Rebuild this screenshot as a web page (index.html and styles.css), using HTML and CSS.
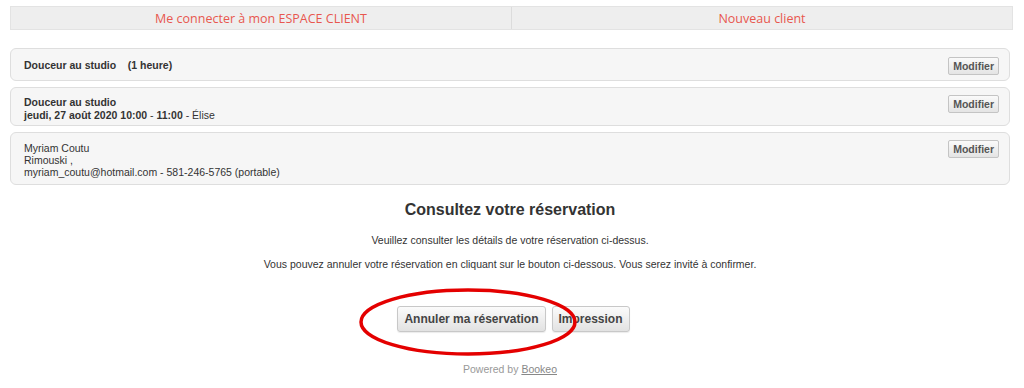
FILE: index.html
```html
<!DOCTYPE html>
<html lang="fr">
<head>
<meta charset="utf-8">
<link rel="stylesheet" href="styles.css">
</head>
<body>
<div class="page">
  <div class="topbar">
    <a class="tab">Me connecter à mon ESPACE CLIENT</a>
    <a class="tab">Nouveau client</a>
  </div>

  <div class="cards">
    <div class="card c1">
      <div class="info"><b>Douceur au studio &nbsp;&nbsp; (1 heure)</b></div>
      <button class="mod">Modifier</button>
    </div>
    <div class="card c2">
      <div class="info"><b>Douceur au studio</b><br><b>jeudi, 27 août 2020 10:00</b> - <b>11:00</b> - Élise</div>
      <button class="mod">Modifier</button>
    </div>
    <div class="card c3">
      <div class="info">Myriam Coutu<br>Rimouski ,<br>myriam_coutu@hotmail.com - 581-246-5765 (portable)</div>
      <button class="mod">Modifier</button>
    </div>
  </div>

  <h2 class="title">Consultez votre réservation</h2>
  <p class="txt t1">Veuillez consulter les détails de votre réservation ci-dessus.</p>
  <p class="txt t2">Vous pouvez annuler votre réservation en cliquant sur le bouton ci-dessous. Vous serez invité à confirmer.</p>

  <div class="actions">
    <button class="btn">Annuler ma réservation</button>
    <button class="btn">Impression</button>
  </div>

  <div class="powered">Powered by <a>Bookeo</a></div>

  <svg class="ring" width="230" height="72" viewBox="0 0 230 72">
    <ellipse cx="115" cy="36" rx="107" ry="32" fill="none" stroke="#e40000" stroke-width="3.5"/>
  </svg>
</div>
</body>
</html>
```

FILE: styles.css
```css
* { box-sizing: border-box; }
html, body { margin: 0; padding: 0; background: #fff; }
body { font-family: "Liberation Sans", Arial, sans-serif; color: #333; }

.page { position: relative; padding: 6px 11px 0 10px; width: 1024px; height: 388px; }

.topbar {
  display: flex;
  height: 24px;
  background: #eeeeee;
  border: 1px solid #e3e3e3;
  width: 1003px;
}
.tab {
  flex: 1;
  display: flex;
  align-items: center;
  justify-content: center;
  font-family: "Open Sans", sans-serif;
  font-size: 12.5px;
  color: #e8574e;
}
.tab + .tab { border-left: 1px solid #dcdcdc; }

.cards { margin-top: 18px; width: 1000px; display: flex; flex-direction: column; gap: 6px; }
.card {
  display: flex;
  justify-content: space-between;
  align-items: flex-start;
  background: #f6f6f6;
  border: 1px solid #dedede;
  border-radius: 6px;
  padding: 7px 10px 6px 13px;
  font-size: 10.5px;
  line-height: 13px;
  color: #333;
}
.c1 { height: 33px; padding-top: 8px; }
.c1 .info { padding-top: 2px; }
.c2 { height: 39px; }
.c2 .info { padding-top: 1px; }
.c3 { height: 53px; line-height: 12px; }
.c3 .info { padding-top: 2px; }

.mod {
  height: 18px;
  padding: 0 4px;
  font-family: "Liberation Sans", Arial, sans-serif;
  font-size: 10.5px;
  font-weight: bold;
  color: #555;
  background: linear-gradient(#fafafa, #e4e4e4);
  border: 1px solid #c4c4c4;
  border-radius: 2px;
  line-height: 16px;
}

.title {
  margin: 15px 0 0;
  width: 1000px;
  text-align: center;
  font-size: 16px;
  line-height: 20px;
  font-weight: bold;
  color: #333;
}
.txt {
  margin: 0;
  width: 1000px;
  text-align: center;
  font-size: 10.5px;
  line-height: 13px;
  color: #333;
}
.t1 { margin-top: 14px; }
.t2 { margin-top: 11px; }

.actions {
  width: 1000px;
  display: flex;
  justify-content: center;
  gap: 6px;
  margin-top: 35px;
  padding-left: 7px;
}
.btn {
  height: 26px;
  padding: 0 6px;
  font-family: "Liberation Sans", Arial, sans-serif;
  font-size: 12px;
  font-weight: bold;
  color: #444;
  background: linear-gradient(#fbfbfb, #e2e2e2);
  border: 1px solid #c8c8c8;
  border-radius: 3px;
  box-shadow: 0 1px 1px rgba(0,0,0,0.08);
}

.powered {
  width: 1000px;
  text-align: center;
  margin-top: 31px;
  font-size: 10.5px;
  line-height: 13px;
  color: #999;
}
.powered a { color: #888; text-decoration: underline; }

.ring { position: absolute; left: 353px; top: 286px; }
```
